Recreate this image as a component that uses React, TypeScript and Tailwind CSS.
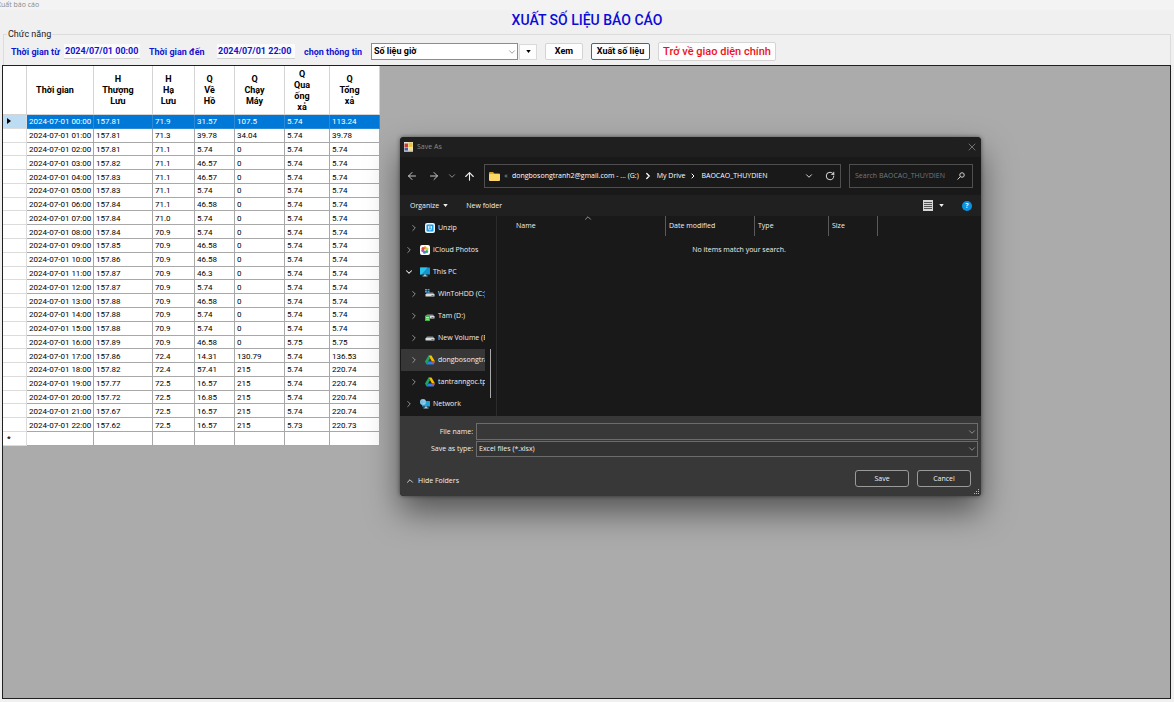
import React from 'react';
import { ArrowLeft, ArrowRight, ArrowUp, ChevronDown, ChevronRight, ChevronUp, RotateCw, X } from 'lucide-react';

const columns = [
  { title: 'Thời gian', width: 'w-[67px]' },
  { title: 'H Thượng Lưu', width: 'w-[59px]' },
  { title: 'H Hạ Lưu', width: 'w-[42px]' },
  { title: 'Q Về Hồ', width: 'w-[40px]' },
  { title: 'Q Chạy Máy', width: 'w-[50px]' },
  { title: 'Q Qua ống xả', width: 'w-[45px]' },
  { title: 'Q Tổng xả', width: 'w-[50px]' },
];

const rows = [
  ['157.81', '71.9', '31.57', '107.5', '5.74', '113.24'],
  ['157.81', '71.3', '39.78', '34.04', '5.74', '39.78'],
  ['157.81', '71.1', '5.74', '0', '5.74', '5.74'],
  ['157.82', '71.1', '46.57', '0', '5.74', '5.74'],
  ['157.83', '71.1', '46.57', '0', '5.74', '5.74'],
  ['157.83', '71.1', '5.74', '0', '5.74', '5.74'],
  ['157.84', '71.1', '46.58', '0', '5.74', '5.74'],
  ['157.84', '71.0', '5.74', '0', '5.74', '5.74'],
  ['157.84', '70.9', '5.74', '0', '5.74', '5.74'],
  ['157.85', '70.9', '46.58', '0', '5.74', '5.74'],
  ['157.86', '70.9', '46.58', '0', '5.74', '5.74'],
  ['157.87', '70.9', '46.3', '0', '5.74', '5.74'],
  ['157.87', '70.9', '5.74', '0', '5.74', '5.74'],
  ['157.88', '70.9', '46.58', '0', '5.74', '5.74'],
  ['157.88', '70.9', '5.74', '0', '5.74', '5.74'],
  ['157.88', '70.9', '5.74', '0', '5.74', '5.74'],
  ['157.89', '70.9', '46.58', '0', '5.75', '5.75'],
  ['157.86', '72.4', '14.31', '130.79', '5.74', '136.53'],
  ['157.82', '72.4', '57.41', '215', '5.74', '220.74'],
  ['157.77', '72.5', '16.57', '215', '5.74', '220.74'],
  ['157.72', '72.5', '16.85', '215', '5.74', '220.74'],
  ['157.67', '72.5', '16.57', '215', '5.74', '220.74'],
  ['157.62', '72.5', '16.57', '215', '5.73', '220.73'],
].map((values, hour) => [`2024-07-01 ${String(hour).padStart(2, '0')}:00`, ...values]);

function UnzipIcon() {
  return (
    <svg viewBox="0 0 20 20" className="size-[10px]">
      <rect width="20" height="20" rx="4" fill="#e8f4fc" />
      <rect x="3" y="3" width="14" height="14" rx="2" fill="#1c9be6" />
      <path d="M7 6v5a3 3 0 0 0 6 0V6M10 5v6" fill="none" stroke="#fff" strokeWidth="1.6" />
    </svg>
  );
}

function PhotosIcon() {
  return (
    <svg viewBox="0 0 20 20" className="size-[10px]">
      <rect width="20" height="20" rx="4" fill="#fff" />
      <circle cx="10" cy="5.5" r="3" fill="#f7941d" />
      <circle cx="14" cy="8" r="3" fill="#c8d92b" />
      <circle cx="13.5" cy="13" r="3" fill="#2fb46e" />
      <circle cx="9" cy="14.5" r="3" fill="#4a7fd6" />
      <circle cx="5.5" cy="11" r="3" fill="#b04fc0" />
      <circle cx="6" cy="7" r="3" fill="#ee4438" />
      <circle cx="10" cy="10" r="1.6" fill="#ffb070" />
    </svg>
  );
}

function MonitorIcon() {
  return (
    <svg viewBox="0 0 20 20" className="size-[10px]">
      <rect y="1" width="20" height="14" rx="1" fill="#1593cf" />
      <path d="M0 2a1 1 0 0 1 1-1h14L3 15H1a1 1 0 0 1-1-1z" fill="#2cc3ea" />
      <path d="M8 15h4v2h3v2H5v-2h3z" fill="#a9c7d6" />
    </svg>
  );
}

function DriveBody() {
  return (
    <>
      <path d="M4 7h12l3 4H1z" fill="#8d9296" />
      <rect x="1" y="10" width="18" height="5" rx="1" fill="#d8dcdf" />
      <rect x="13" y="12" width="4" height="1.5" fill="#4d5357" />
    </>
  );
}

function WindowsDriveIcon() {
  return (
    <svg viewBox="0 0 20 20" className="size-[10px]">
      <DriveBody />
      <path d="M0 0h4v3H0zM5 0h4v3H5zM0 4h4v3H0zM5 4h4v3H5z" fill="#31a8ee" />
    </svg>
  );
}

function SharedDriveIcon() {
  return (
    <svg viewBox="0 0 20 20" className="size-[10px]">
      <DriveBody />
      <rect y="9" width="10" height="11" rx="1" fill="#3eb54a" />
      <path d="M2 12h6v1.5H2zM2 15.500h6v1.500H2z" fill="#e8ffe8" />
    </svg>
  );
}

function DriveIcon() {
  return (
    <svg viewBox="0 0 20 20" className="size-[10px]">
      <DriveBody />
    </svg>
  );
}

function GoogleDriveIcon() {
  return (
    <svg viewBox="0 0 20 20" className="size-[10px]">
      <path d="M7 1h6l7 12h-6z" fill="#fbbc04" />
      <path d="M7 1l3 5.5L3 19l-3-6z" fill="#1ea362" />
      <path d="M6 13h14l-3 6H3z" fill="#2f7de9" />
      <path d="M16.5 13H20l-3 6-3-6z" fill="#ea4335" />
    </svg>
  );
}

function NetworkIcon() {
  return (
    <svg viewBox="0 0 20 20" className="size-[10px]">
      <rect x="4" y="4" width="16" height="11" rx="1" fill="#1fa2dc" />
      <path d="M10 15h4v2h3v2H7v-2h3z" fill="#a9c7d6" />
      <circle cx="6" cy="6" r="6" fill="#8fd0ee" />
      <path d="M0 6h12M6 0c-3 3-3 9 0 12" fill="none" stroke="#5b9fc8" />
    </svg>
  );
}

function FormIcon() {
  return (
    <svg viewBox="0 0 18 20" className="h-[10px] w-[9px]">
      <rect width="18" height="20" fill="#e9e4da" />
      <rect x="1" y="3" width="7" height="7" fill="#c73a35" />
      <rect x="9" y="1" width="8" height="9" fill="#f2c231" />
      <rect x="1" y="11" width="7" height="6" fill="#3e5fa8" />
      <rect x="10" y="12" width="7" height="5" fill="#f6dc85" />
      <path d="M0 18.5h18" stroke="#555" />
    </svg>
  );
}

function FolderIcon() {
  return (
    <svg viewBox="0 0 22 18" className="h-[9px] w-[11px] shrink-0">
      <path d="M0 2a2 2 0 0 1 2-2h6l3 3h9a2 2 0 0 1 2 2v3H0z" fill="#e0a526" />
      <rect y="4" width="22" height="14" rx="2" fill="#ffd767" />
    </svg>
  );
}

function SearchIcon() {
  return (
    <svg viewBox="0 0 16 16" className="size-2 shrink-0" fill="none" stroke="#d0d0d0" strokeWidth="2">
      <circle cx="10" cy="6" r="4.5" />
      <path d="M7 9l-6 6" />
    </svg>
  );
}

function ListViewIcon() {
  return (
    <svg viewBox="0 0 10 11" className="h-[11px] w-[10px]">
      <rect width="10" height="11" fill="#d6d6d6" />
      <path d="M1 2.5h8M1 4.5h8M1 6.5h8M1 8.5h8" stroke="#444" strokeWidth=".9" />
    </svg>
  );
}

function Caret() {
  return (
    <svg viewBox="0 0 6 4" className="h-[3px] w-[5px]">
      <path d="M0 0h6L3 4z" fill="currentColor" />
    </svg>
  );
}

const places = [
  { label: 'Unzip', icon: <UnzipIcon />, nested: true },
  { label: 'iCloud Photos', icon: <PhotosIcon /> },
  { label: 'This PC', icon: <MonitorIcon />, open: true },
  { label: 'WinToHDD (C:)', icon: <WindowsDriveIcon />, nested: true },
  { label: 'Tam (D:)', icon: <SharedDriveIcon />, nested: true },
  { label: 'New Volume (E:)', icon: <DriveIcon />, nested: true },
  { label: 'dongbosongtranh2', icon: <GoogleDriveIcon />, nested: true, selected: true },
  { label: 'tantranngoc.tpc', icon: <GoogleDriveIcon />, nested: true },
  { label: 'Network', icon: <NetworkIcon /> },
];

function ReportTable() {
  return (
    <table className="h-[380px] w-[377px] table-fixed border-separate border-spacing-0 bg-white text-[8px] leading-[11px] text-black">
      <thead>
        <tr className="h-[49px] text-[9px]">
          <th className="w-[24px] border-r border-b border-[#d4d4d4]" />
          {columns.map((column) => (
            <th key={column.title} className={`${column.width} border-r border-b border-[#d4d4d4] p-0 pt-px pr-[10px]`}>
              {column.title === 'Thời gian'
                ? column.title
                : column.title.split(' ').map((word) => (
                    <span key={word} className="block">{word}</span>
                  ))}
            </th>
          ))}
        </tr>
      </thead>
      <tbody>
        {rows.map((row, index) => (
          <tr key={row[0]} className={index === 0 ? 'bg-[#0078d7] text-white' : ''}>
            <td className={`border-r border-b border-[#dcdcdc] p-0 pl-1 text-black ${index === 0 ? 'bg-[#bcdcf4]' : ''}`}>
              {index === 0 && (
                <svg viewBox="0 0 4 6" className="h-[6px] w-1">
                  <path d="M0 0l4 3-4 3z" />
                </svg>
              )}
            </td>
            {row.map((value, i) => (
              <td
                key={i}
                className={`border-r border-b p-0 pt-px pl-[2px] whitespace-nowrap ${index === 0 ? 'border-[#2b8ad8]' : 'border-[#a8a8a8]'}`}
              >
                {value}
              </td>
            ))}
          </tr>
        ))}
        <tr>
          <td className="border-r border-b border-[#dcdcdc] p-0 pt-px pl-1 font-bold">*</td>
          {columns.map((column) => (
            <td key={column.title} className="border-r border-b border-[#a8a8a8] p-0" />
          ))}
        </tr>
      </tbody>
    </table>
  );
}

function SaveDialog() {
  return (
    <div
      role="dialog"
      aria-label="Save As"
      className="absolute top-[137px] left-[400px] flex w-[581px] flex-col overflow-hidden rounded-[4px] bg-[#191919] font-['Open_Sans',sans-serif] text-[7px] leading-[10px] text-[#f0f0f0] shadow-[0_16px_32px_rgba(0,0,0,0.5),0_0_4px_rgba(0,0,0,0.5)]"
    >
      <div className="flex h-5 items-center gap-1 bg-[#1f1f1f] pr-[3px] pl-1 text-[#8c8c8c]">
        <FormIcon />
        <span className="flex-1">Save As</span>
        <button aria-label="Close"><X className="size-3" strokeWidth={1.5} /></button>
      </div>

      <div className="flex h-[38px] items-center gap-2 pr-2 pl-[6px]">
        <div className="flex w-[70px] items-center justify-between">
          <button aria-label="Back"><ArrowLeft className="size-3 text-[#c8c8c8]" /></button>
          <button aria-label="Forward" className="ml-1"><ArrowRight className="size-3 text-[#c8c8c8]" /></button>
          <button aria-label="Recent"><ChevronDown className="size-[10px] text-[#a0a0a0]" /></button>
          <button aria-label="Up"><ArrowUp className="size-[13px]" /></button>
        </div>
        <div className="flex h-6 flex-1 items-center gap-1 border border-[#4f4f4f] px-1 text-[#ffffff]">
          <FolderIcon />
          <span className="w-1 text-center text-[#a0a0a0]">«</span>
          <span>dongbosongtranh2@gmail.com - ... (G:)</span>
          <ChevronRight className="size-[10px]" strokeWidth={3} />
          <span>My Drive</span>
          <ChevronRight className="size-2" strokeWidth={3} />
          <span className="flex-1">BAOCAO_THUYDIEN</span>
          <button aria-label="Previous locations" className="px-[6px]"><ChevronDown className="size-[10px]" /></button>
          <button aria-label="Refresh" className="px-px"><RotateCw className="size-[10px]" strokeWidth={2} /></button>
        </div>
        <div className="flex h-6 w-[124px] items-center border border-[#4f4f4f] pr-1 pl-[5px]">
          <input
            aria-label="Search"
            placeholder="Search BAOCAO_THUYDIEN"
            className="w-full min-w-0 flex-1 bg-transparent outline-none placeholder:text-[#787878]"
          />
          <div className="px-[3px]"><SearchIcon /></div>
        </div>
      </div>

      <div className="flex h-[21px] items-center bg-[#202020] pr-1 pl-[10px]">
        <button className="flex items-center gap-1">Organize <Caret /></button>
        <button className="ml-[18px]">New folder</button>
        <div className="ml-auto flex items-center gap-[6px]">
          <button aria-label="View" className="flex items-center gap-[6px]"><ListViewIcon /><Caret /></button>
          <button aria-label="Help" className="mr-[5px] ml-3 flex size-[10px] items-center justify-center rounded-full bg-[#0a93e2] font-bold">?</button>
        </div>
      </div>

      <div className="flex h-[200px]">
        <div className="flex w-[97px] border-r border-[#2c2c2c]">
          <ul className="w-[85px] overflow-hidden pt-px pl-px">
            {places.map((place) => (
              <li
                key={place.label}
                className={`flex h-[22px] items-center whitespace-nowrap ${place.nested ? 'pl-2' : 'pl-[3px]'} ${place.selected ? 'bg-[#373737]' : ''}`}
              >
                {place.open ? (
                  <ChevronDown className="mr-[6px] size-[10px] shrink-0" strokeWidth={2.5} />
                ) : (
                  <ChevronRight className="mr-[6px] size-[10px] shrink-0 text-[#a8a8a8]" />
                )}
                <span className="mr-[3px] shrink-0">{place.icon}</span>
                {place.label}
              </li>
            ))}
          </ul>
          <div className="mt-[133px] ml-[5px] h-[49px] w-px bg-[#a8a8a8]" />
        </div>

        <div className="flex-1">
          <div className="flex h-5 items-center pl-[19px]">
            <div className="flex w-[149px] items-center self-stretch">
              <span className="w-[67px]">Name</span>
              <ChevronUp className="-mt-[3px] size-[10px] self-start text-[#a8a8a8]" />
            </div>
            <div className="flex w-[89px] items-center self-stretch border-l border-[#5a5a5a] pl-[3px]">Date modified</div>
            <div className="flex w-[74px] items-center self-stretch border-l border-[#5a5a5a] pl-[3px]">Type</div>
            <div className="flex w-[50px] items-center self-stretch border-x border-[#5a5a5a] pl-[3px]">Size</div>
          </div>
          <p className="mt-[9px] text-center">No items match your search.</p>
        </div>
      </div>

      <div className="flex flex-col bg-[#383838] pt-[7px]">
        <div className="grid grid-cols-[73px_1fr] items-center gap-x-[3px] gap-y-px pr-[3px]">
          <label htmlFor="file-name" className="text-right">File name:</label>
          <div className="relative">
            <input id="file-name" className="block h-[17px] w-full border border-[#6c6c6c] bg-[#383838] px-[2px] outline-none" />
            <ChevronDown className="absolute top-1 right-px size-[10px] text-[#c0c0c0]" strokeWidth={1.5} />
          </div>
          <label htmlFor="file-type" className="text-right">Save as type:</label>
          <div className="relative">
            <select id="file-type" className="block h-4 w-full appearance-none border border-[#6c6c6c] bg-[#333333] px-[2px] outline-none">
              <option>Excel files (*.xlsx)</option>
            </select>
            <ChevronDown className="absolute top-[3px] right-px size-[10px] text-[#c0c0c0]" strokeWidth={1.5} />
          </div>
        </div>
        <div className="flex h-[39px] items-center justify-between pt-1 pr-[10px] pl-[5px]">
          <button className="flex items-center gap-[3px] pt-1"><ChevronUp className="size-[10px]" />Hide Folders</button>
          <div className="flex gap-2">
            <button className="h-[17px] w-[54px] rounded-[3px] border border-[#9a9a9a] bg-[#333333]">Save</button>
            <button className="h-[17px] w-[54px] rounded-[3px] border border-[#9a9a9a] bg-[#333333]">Cancel</button>
          </div>
        </div>
      </div>
      <svg viewBox="0 0 6 6" className="absolute right-px bottom-px size-[6px]" fill="#b8b8b8">
        <path d="M4 0h1v1H4zM4 2h1v1H4zM2 2h1v1H2zM4 4h1v1H4zM2 4h1v1H2zM0 4h1v1H0z" />
      </svg>
    </div>
  );
}

export default function App() {
  return (
    <div className="relative flex min-h-screen flex-col bg-[#f0f0f0] px-[2px] pb-[3px] font-['Roboto',sans-serif] text-[9px] leading-[11px]">
      <div className="-mx-[2px] h-[10px] overflow-hidden bg-[#f3f3f3] font-['Open_Sans',sans-serif] text-[7px] leading-[9px] text-[#8a8a8a]">
        <span className="-ml-[3px]">Xuất báo cáo</span>
      </div>
      <h1 className="h-[19px] text-center text-[14px] leading-5 font-medium text-[#0b0bd8]">XUẤT SỐ LIỆU BÁO CÁO</h1>

      <fieldset className="mx-px h-[36px] border border-b-0 border-[#dcdcdc] px-[7px]">
        <legend className="-ml-1 px-px text-[#222222]">Chức năng</legend>
        <div className="flex h-[23px] items-center font-bold text-[#1414d2]">
          <label htmlFor="from" className="w-[53px] pt-px whitespace-nowrap">Thời gian từ</label>
          <input id="from" defaultValue="2024/07/01 00:00" className="h-[15px] w-[76px] border-b border-[#d0d0d0] bg-[#fafafa] px-px outline-none" />
          <label htmlFor="to" className="ml-[9px] w-[68px] pt-px whitespace-nowrap">Thời gian đến</label>
          <input id="to" defaultValue="2024/07/01 22:00" className="h-[15px] w-[78px] border-b border-[#d0d0d0] bg-[#fafafa] px-px outline-none" />
          <label htmlFor="info" className="ml-[9px] w-[67px] pt-px whitespace-nowrap">chọn thông tin</label>
          <div className="relative">
            <select id="info" className="block h-[17px] w-[147px] appearance-none border border-[#8c8c8c] bg-white px-[2px] text-black outline-none">
              <option>Số liệu giờ</option>
            </select>
            <ChevronDown className="absolute top-1 right-px size-[10px] text-[#666666]" strokeWidth={1.5} />
          </div>
          <button aria-label="Mở danh sách" className="ml-px flex h-4 w-[18px] items-center justify-center border border-[#dadada] bg-[#fdfdfd] text-black"><Caret /></button>
          <button className="ml-2 h-[17px] w-[38px] rounded-[2px] border border-[#d4d4d4] bg-[#fdfdfd] text-black">Xem</button>
          <button className="ml-2 h-[17px] w-[59px] rounded-[2px] border border-[#0078d4] bg-[#fdfdfd] text-black">Xuất số liệu</button>
          <button className="ml-2 h-[19px] w-[118px] rounded-[2px] border border-[#d4d4d4] bg-[#fdfdfd] text-[11px] font-medium text-[#f01020]">Trở về giao diện chính</button>
        </div>
      </fieldset>

      <main className="mr-px flex-1 border border-[#202020] bg-[#ababab]">
        <ReportTable />
      </main>

      <SaveDialog />
    </div>
  );
}
